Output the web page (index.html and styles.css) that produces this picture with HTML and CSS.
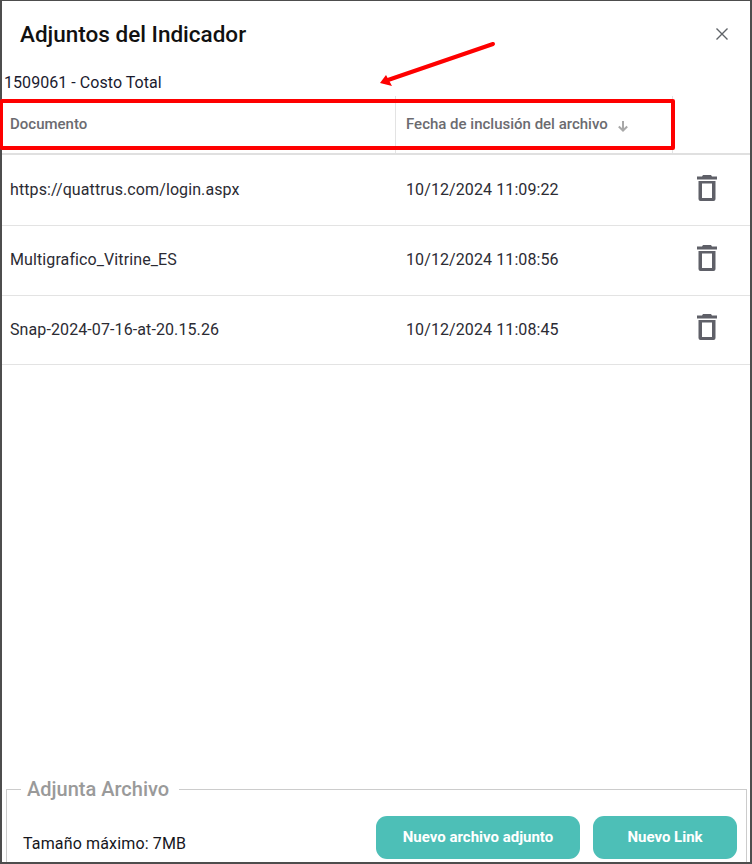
FILE: index.html
```html
<!DOCTYPE html>
<html lang="es">
<head>
<meta charset="utf-8">
<title>Adjuntos del Indicador</title>
<link rel="stylesheet" href="styles.css">
</head>
<body>
<div class="dialog">
  <header class="title-bar">
    <h1 class="title">Adjuntos del Indicador</h1>
    <svg class="close" viewBox="0 0 14 14" width="14" height="14"><path d="M1.5 1.5l11 11M12.5 1.5l-11 11"/></svg>
  </header>
  <p class="subtitle">1509061 - Costo Total</p>
  <div class="table">
    <div class="row head">
      <div class="cell doc">Documento</div>
      <div class="cell date">Fecha de inclusión del archivo
        <svg class="sort" viewBox="0 0 12 12" width="12" height="12"><path d="M6 1v9.5M1.8 6.5L6 10.5l4.200-4"/></svg>
      </div>
      <div class="cell act"></div>
    </div>
    <div class="row first">
      <div class="cell doc">https://quattrus.com/login.aspx</div>
      <div class="cell date">10/12/2024 11:09:22</div>
      <div class="cell act"><svg class="trash" viewBox="0 0 20 26" width="20" height="26"><path d="M6 0h8l1 1.500h5v3H0v-3h5z"/><path d="M1.500 6h17v18a2 2 0 0 1-2 2h-13a2 2 0 0 1-2-2zM5 8.500v14.500h10V8.500z"/></svg></div>
    </div>
    <div class="row">
      <div class="cell doc">Multigrafico_Vitrine_ES</div>
      <div class="cell date">10/12/2024 11:08:56</div>
      <div class="cell act"><svg class="trash" viewBox="0 0 20 26" width="20" height="26"><path d="M6 0h8l1 1.500h5v3H0v-3h5z"/><path d="M1.500 6h17v18a2 2 0 0 1-2 2h-13a2 2 0 0 1-2-2zM5 8.500v14.500h10V8.500z"/></svg></div>
    </div>
    <div class="row last">
      <div class="cell doc">Snap-2024-07-16-at-20.15.26</div>
      <div class="cell date">10/12/2024 11:08:45</div>
      <div class="cell act"><svg class="trash" viewBox="0 0 20 26" width="20" height="26"><path d="M6 0h8l1 1.500h5v3H0v-3h5z"/><path d="M1.500 6h17v18a2 2 0 0 1-2 2h-13a2 2 0 0 1-2-2zM5 8.500v14.500h10V8.500z"/></svg></div>
    </div>
  </div>
  <fieldset class="upload">
    <legend class="upload-title">Adjunta Archivo</legend>
    <span class="limit">Tamaño máximo: 7MB</span>
    <div class="actions">
      <button class="btn wide">Nuevo archivo adjunto</button>
      <button class="btn narrow">Nuevo Link</button>
    </div>
  </fieldset>
</div>
<div class="mark-box"></div>
<svg class="mark-arrow" viewBox="0 0 130 50" width="130" height="50"><path class="shaft" d="M115 6L10 42"/><path class="tip" d="M2 45L8 37L14 48Z"/></svg>
</body>
</html>
```
FILE: styles.css
```css
* { box-sizing: border-box; }
html, body { margin: 0; padding: 0; }
body {
  width: 752px;
  height: 864px;
  overflow: hidden;
  position: relative;
  font-family: Roboto, "Noto Sans", sans-serif;
  background: #fff;
}
.dialog {
  width: 752px;
  height: 864px;
  border: 2px solid #4d4d4d;
  border-top-width: 1px;
  display: flex;
  flex-direction: column;
  overflow: hidden;
  background: #fff;
}
.title-bar {
  display: flex;
  justify-content: space-between;
  align-items: center;
  height: 65px;
  padding: 1px 21px 0 18px;
}
.title {
  margin: 0;
  font-size: 22.5px;
  font-weight: 500;
  color: #111;
  line-height: 64px;
}
.close { fill: none; stroke: #5f6368; stroke-width: 1.4; }
.subtitle {
  margin: 7px 0 0 2px;
  font-size: 16px;
  line-height: 20px;
  color: #1a1a2e;
  letter-spacing: 0.05px;
}
.table { margin-top: 3px; }
.row {
  display: flex;
  align-items: center;
  height: 70px;
  padding-bottom: 2px;
  border-bottom: 1px solid #e3e3e3;
  font-size: 16px;
  color: #2b2b33;
  letter-spacing: 0.1px;
}
.row.first { height: 71px; }
.row.last { height: 69px; }
.row.head {
  height: 59px;
  padding-bottom: 0;
  border-bottom: 2px solid #e0e0e0;
  font-size: 15px;
  font-weight: 500;
  color: #6b6b70;
  letter-spacing: 0;
}
.cell { padding-left: 8px; }
.doc { width: 393px; }
.date { width: 277px; padding-left: 11px; }
.act { flex: 1; padding: 0 0 0 25px; }
.head .cell { height: 100%; display: flex; align-items: center; padding-bottom: 2px; }
.head .date { border-left: 1px solid #e3e3e3; padding-left: 10px; }
.head .act { border-left: 1px solid #e3e3e3; }
.sort { margin-left: 9px; margin-top: 5px; fill: none; stroke: #a8a8a8; stroke-width: 2; }
.trash { display: block; margin-top: -3px; fill: #5f6068; fill-rule: evenodd; }
.last .trash { margin-top: -5px; }
.upload {
  margin: auto 3px 0 4px;
  height: 85px;
  padding: 0 9px 0 16px;
  border: 1px solid #cccccc;
  border-bottom: 0;
  display: flex;
  justify-content: space-between;
  align-items: flex-start;
  min-width: 0;
}
.upload-title {
  margin-left: -2px;
  padding: 0 10px 0 6px;
  font-size: 20px;
  font-weight: 500;
  color: #9a9a9a;
}
.limit {
  margin-top: 33px;
  font-size: 16px;
  color: #16161c;
  letter-spacing: 0.15px;
}
.actions { display: flex; gap: 13px; margin-top: 15px; }
.btn {
  height: 43px;
  padding: 0 0 2px;
  border: 0;
  border-radius: 11px;
  background: #4dbfb7;
  color: #fff;
  font-family: inherit;
  font-size: 15px;
  font-weight: 700;
}
.wide { width: 204px; }
.narrow { width: 144px; }
.mark-box {
  position: absolute;
  left: 0;
  top: 99px;
  width: 675px;
  height: 51px;
  border: 4px solid #fe0000;
  border-left-width: 3px;
  border-radius: 2px;
}
.mark-arrow { position: absolute; left: 378px; top: 38px; }
.shaft { fill: none; stroke: #fe0000; stroke-width: 4; stroke-linecap: round; }
.tip { fill: #fe0000; }
```
